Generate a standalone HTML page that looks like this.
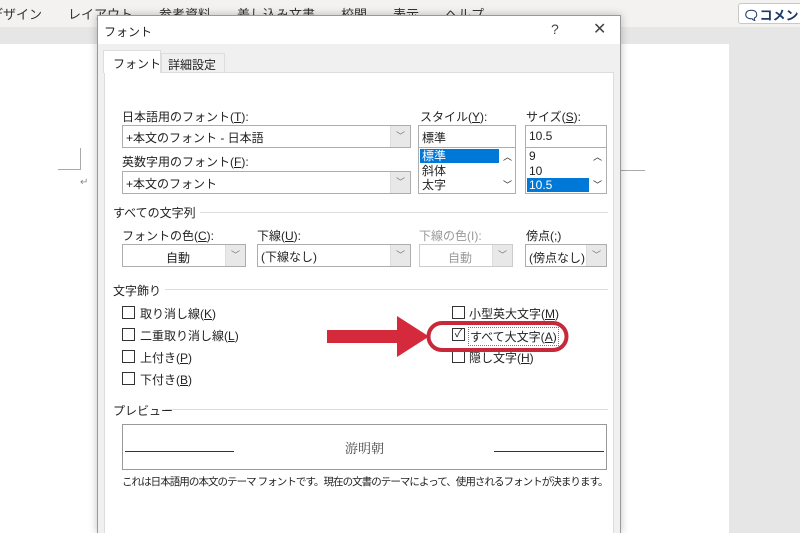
<!DOCTYPE html>
<html><head><meta charset="utf-8"><style>
*{margin:0;padding:0;box-sizing:border-box}
html,body{width:800px;height:533px;overflow:hidden}
body{position:relative;background:#e6e6e6;font-family:"Liberation Sans","Noto Sans CJK JP",sans-serif;font-size:12px;color:#222}
.a{position:absolute;white-space:nowrap}
.box{position:absolute;background:#fff;border:1px solid #adadad}
.dd{position:absolute;top:0;right:0;width:20px;height:100%;background:#e8e8e8;border-left:1px solid #ddd;color:#777;font-size:9px;text-align:center;line-height:20px}
.cb{position:absolute;width:13px;height:13px;border:1px solid #333;background:#fff}
.hl{position:absolute;height:1px;background:#ddd}
u{text-decoration:underline}
</style></head><body>
<div class="a" style="left:0;top:0;width:800px;height:27px;background:#f3f2f1"></div>
<div class="a" style="left:-10px;top:4px;font-size:13px;color:#333">デザイン　　レイアウト　　参考資料　　差し込み文書　　校閲　　表示　　ヘルプ</div>
<div class="a" style="left:738px;top:3px;width:70px;height:21px;background:#fff;border:1px solid #c8c8c8;border-radius:3px;font-size:13px;font-weight:bold;color:#1e3a6a;padding:1px 0 0 4px">🗨コメント</div>
<div class="a" style="left:0;top:44px;width:729px;height:489px;background:#fff"></div>
<div class="a" style="left:80px;top:148px;width:1px;height:22px;background:#aaa"></div>
<div class="a" style="left:58px;top:169px;width:23px;height:1px;background:#aaa"></div>
<div class="a" style="left:80px;top:177px;color:#888;font-size:10px">↵</div>
<div class="a" style="left:620px;top:170px;width:25px;height:1px;background:#aaa"></div>

<div class="a" style="left:97px;top:15px;width:524px;height:518px;background:#f0f0f0;border:1px solid #999;border-bottom:none;box-shadow:0 0 8px rgba(0,0,0,.25)"></div>
<div class="a" style="left:98px;top:16px;width:522px;height:28px;background:#fff"></div>
<div class="a" style="left:104px;top:23px;font-size:12px">フォント</div>
<div class="a" style="left:551px;top:21px;font-size:14px;color:#444">?</div>
<div class="a" style="left:593px;top:19px;font-size:16px;color:#444">✕</div>
<div class="a" style="left:104px;top:72px;width:510px;height:461px;background:#fff;border:1px solid #ddd;border-bottom:none"></div>
<div class="a" style="left:103px;top:50px;width:58px;height:23px;background:#fff;border:1px solid #ddd;border-bottom:none"></div>
<div class="a" style="left:113px;top:55px">フォント</div>
<div class="a" style="left:161px;top:53px;width:64px;height:19px;border:1px solid #ddd;border-bottom:none;background:#f0f0f0"></div>
<div class="a" style="left:168px;top:56px">詳細設定</div>

<div class="a" style="left:122px;top:108px">日本語用のフォント(<u>T</u>):</div>
<div class="box" style="left:122px;top:125px;width:289px;height:23px"><span class="a" style="left:3px;top:3px">+本文のフォント - 日本語</span><div class="dd">﹀</div></div>
<div class="a" style="left:122px;top:153px">英数字用のフォント(<u>F</u>):</div>
<div class="box" style="left:122px;top:171px;width:289px;height:23px"><span class="a" style="left:3px;top:3px">+本文のフォント</span><div class="dd">﹀</div></div>

<div class="a" style="left:420px;top:108px">スタイル(<u>Y</u>):</div>
<div class="box" style="left:418px;top:125px;width:98px;height:23px"><span class="a" style="left:3px;top:3px">標準</span></div>
<div class="box" style="left:418px;top:147px;width:98px;height:47px">
<div class="a" style="left:1px;top:1px;width:79px;height:14px;background:#0078d7;color:#fff;padding-left:2px;line-height:14px">標準</div>
<div class="a" style="left:3px;top:16px;line-height:14px">斜体</div><div class="a" style="left:3px;top:30px;line-height:14px">太字</div>
<div class="a" style="left:84px;top:2px;font-size:9px">︿</div><div class="a" style="left:84px;top:30px;font-size:9px">﹀</div></div>

<div class="a" style="left:526px;top:108px">サイズ(<u>S</u>):</div>
<div class="box" style="left:525px;top:125px;width:82px;height:23px"><span class="a" style="left:3px;top:3px">10.5</span></div>
<div class="box" style="left:525px;top:147px;width:82px;height:47px">
<div class="a" style="left:3px;top:1px;line-height:14px">9</div><div class="a" style="left:3px;top:16px;line-height:14px">10</div>
<div class="a" style="left:1px;top:30px;width:62px;height:14px;background:#0078d7;color:#fff;padding-left:2px;line-height:14px">10.5</div>
<div class="a" style="left:67px;top:2px;font-size:9px">︿</div><div class="a" style="left:67px;top:30px;font-size:9px">﹀</div></div>

<div class="a" style="left:113px;top:204px">すべての文字列</div><div class="hl" style="left:200px;top:212px;width:408px"></div>
<div class="a" style="left:122px;top:227px">フォントの色(<u>C</u>):</div>
<div class="a" style="left:257px;top:227px">下線(<u>U</u>):</div>
<div class="a" style="left:419px;top:227px;color:#999">下線の色(I):</div>
<div class="a" style="left:526px;top:227px">傍点(<u>;</u>)</div>
<div class="box" style="left:122px;top:244px;width:124px;height:23px"><span class="a" style="left:43px;top:4px">自動</span><div class="dd">﹀</div></div>
<div class="box" style="left:257px;top:244px;width:154px;height:23px"><span class="a" style="left:3px;top:3px">(下線なし)</span><div class="dd">﹀</div></div>
<div class="box" style="left:419px;top:244px;width:94px;height:23px;border-color:#ccc"><span class="a" style="left:28px;top:4px;color:#999">自動</span><div class="dd">﹀</div></div>
<div class="box" style="left:525px;top:244px;width:82px;height:23px"><span class="a" style="left:3px;top:4px">(傍点なし)</span><div class="dd">﹀</div></div>

<div class="a" style="left:113px;top:282px">文字飾り</div><div class="hl" style="left:165px;top:289px;width:443px"></div>
<div class="cb" style="left:122px;top:306px"></div><div class="a" style="left:140px;top:305px">取り消し線(<u>K</u>)</div>
<div class="cb" style="left:122px;top:328px"></div><div class="a" style="left:140px;top:327px">二重取り消し線(<u>L</u>)</div>
<div class="cb" style="left:122px;top:350px"></div><div class="a" style="left:140px;top:349px">上付き(<u>P</u>)</div>
<div class="cb" style="left:122px;top:372px"></div><div class="a" style="left:140px;top:371px">下付き(<u>B</u>)</div>
<div class="cb" style="left:452px;top:306px"></div><div class="a" style="left:469px;top:305px">小型英大文字(<u>M</u>)</div>
<div class="cb" style="left:452px;top:328px;font-size:11px;line-height:11px;text-align:center">✓</div><div class="a" style="left:468px;top:327px;border:1px dotted #777;padding:0 1px">すべて大文字(<u>A</u>)</div>
<div class="cb" style="left:452px;top:350px"></div><div class="a" style="left:469px;top:349px">隠し文字(<u>H</u>)</div>
<svg class="a" style="left:320px;top:312px" width="260" height="50"><rect x="7" y="18" width="72" height="13" fill="#d42a3c"/><polygon points="77,4 109,24.5 77,45" fill="#d42a3c"/><rect x="108.5" y="11" width="138" height="27" rx="13.5" fill="none" stroke="#c8283a" stroke-width="4"/></svg>

<div class="a" style="left:113px;top:402px">プレビュー</div><div class="hl" style="left:165px;top:409px;width:443px"></div>
<div class="a" style="left:122px;top:424px;width:485px;height:46px;border:1px solid #999;background:#fff"></div>
<div class="a" style="left:125px;top:451px;width:109px;height:1px;background:#333"></div>
<div class="a" style="left:494px;top:451px;width:110px;height:1px;background:#333"></div>
<div class="a" style="left:345px;top:438px;font-family:'Noto Serif CJK SC',serif;font-size:13px;color:#444">游明朝</div>
<div class="a" style="left:122px;top:474px;font-size:10.5px;letter-spacing:-0.95px">これは日本語用の本文のテーマ フォントです。現在の文書のテーマによって、使用されるフォントが決まります。</div>
</body></html>
